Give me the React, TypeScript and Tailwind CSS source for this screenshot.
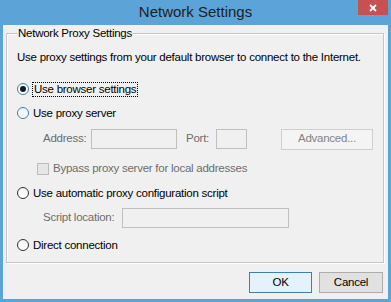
import React from "react";

const font = { fontFamily: '"Liberation Sans", Arial, sans-serif' };

type RadioProps = { label: string; checked?: boolean; hot?: boolean; focus?: boolean };

function Radio({ label, checked = false, hot = false, focus = false }: RadioProps) {
  return (
    <label className="flex items-center h-[16px] gap-[4px] text-black whitespace-nowrap">
      <span
        className={`w-[12px] h-[12px] rounded-full border flex items-center justify-center bg-gradient-to-b from-[#f4f4f4] to-white ${
          hot ? "border-[#3c7fb1]" : "border-[#333333]"
        }`}
      >
        {checked && <span className="w-[6px] h-[6px] rounded-full bg-[#1a1a1a]" />}
      </span>
      <span className={focus ? "outline outline-1 outline-dotted outline-black leading-[13px] px-px" : "leading-[13px]"}>
        {label}
      </span>
    </label>
  );
}

function DisabledBox({ className }: { className: string }) {
  return <div className={`h-[20px] border border-[#bfbfbf] bg-[#f0f0f0] ${className}`} />;
}

export default function App() {
  return (
    <div
      className="w-[391px] h-[302px] bg-[#5ca4d8] flex flex-col text-[11.5px] tracking-[-0.25px] overflow-hidden whitespace-nowrap"
      style={font}
    >
      {/* title bar */}
      <div className="h-[25px] grid grid-cols-[1fr_auto_1fr]">
        <div />
        <div className="text-[15px] tracking-normal leading-[22px] text-[#1e1e1e] pt-px">Network Settings</div>
        <div className="flex justify-end pr-[3px]">
          <button className="w-[30px] h-[15px] bg-[#c75050] flex items-center justify-center">
            <svg width="8" height="8" viewBox="0 0 8 8">
              <path d="M1 1 L7 7 M7 1 L1 7" stroke="white" strokeWidth="1.8" />
            </svg>
          </button>
        </div>
      </div>

      {/* client */}
      <div className="flex-1 mx-[3px] mb-[3px] bg-[#f0f0f0] flex flex-col">
        <div className="relative mt-[8px] ml-[3px] mr-[4px] h-[230px] border border-[#c6c6c6] shadow-[inset_1px_1px_0_white,1px_1px_0_white] pl-[10px] flex flex-col">
          <span className="absolute left-[10px] -top-[9px] px-[1px] bg-[#f0f0f0] leading-[16px] text-black">
            Network Proxy Settings
          </span>

          <div className="mt-[15px] h-[16px] leading-[16px] text-black">
            Use proxy settings from your default browser to connect to the Internet.
          </div>

          <div className="mt-[16px]">
            <Radio label="Use browser settings" checked hot focus />
          </div>
          <div className="mt-[8px]">
            <Radio label="Use proxy server" hot />
          </div>

          <div className="mt-[8px] h-[20px] flex items-center pl-[26px] text-[#6d6d6d]">
            <span className="w-[48px]">Address:</span>
            <DisabledBox className="w-[86px]" />
            <span className="ml-[9px] w-[30px]">Port:</span>
            <DisabledBox className="w-[31px]" />
            <button className="ml-[34px] w-[92px] h-[21px] border border-[#cfcfcf] bg-[#f4f4f4] text-[#838383]">
              Advanced...
            </button>
          </div>

          <div className="mt-[12px] h-[16px] flex items-center pl-[20px] gap-[4px] text-[#6d6d6d]">
            <span className="w-[12px] h-[12px] border border-[#bcbcbc] bg-[#e6e6e6]" />
            <span>Bypass proxy server for local addresses</span>
          </div>

          <div className="mt-[8px]">
            <Radio label="Use automatic proxy configuration script" />
          </div>

          <div className="mt-[7px] h-[20px] flex items-center pl-[26px] text-[#6d6d6d]">
            <span className="w-[79px]">Script location:</span>
            <DisabledBox className="w-[167px]" />
          </div>

          <div className="mt-[9px]">
            <Radio label="Direct connection" />
          </div>
        </div>

        <div className="mt-[9px] flex justify-end gap-[7px] pr-[5px]">
          <button className="w-[63px] h-[21px] border border-[#3c7fb1] bg-[#e5f1fb] text-black">OK</button>
          <button className="w-[64px] h-[21px] border border-[#adadad] bg-[#e1e1e1] text-black">Cancel</button>
        </div>
      </div>
    </div>
  );
}
